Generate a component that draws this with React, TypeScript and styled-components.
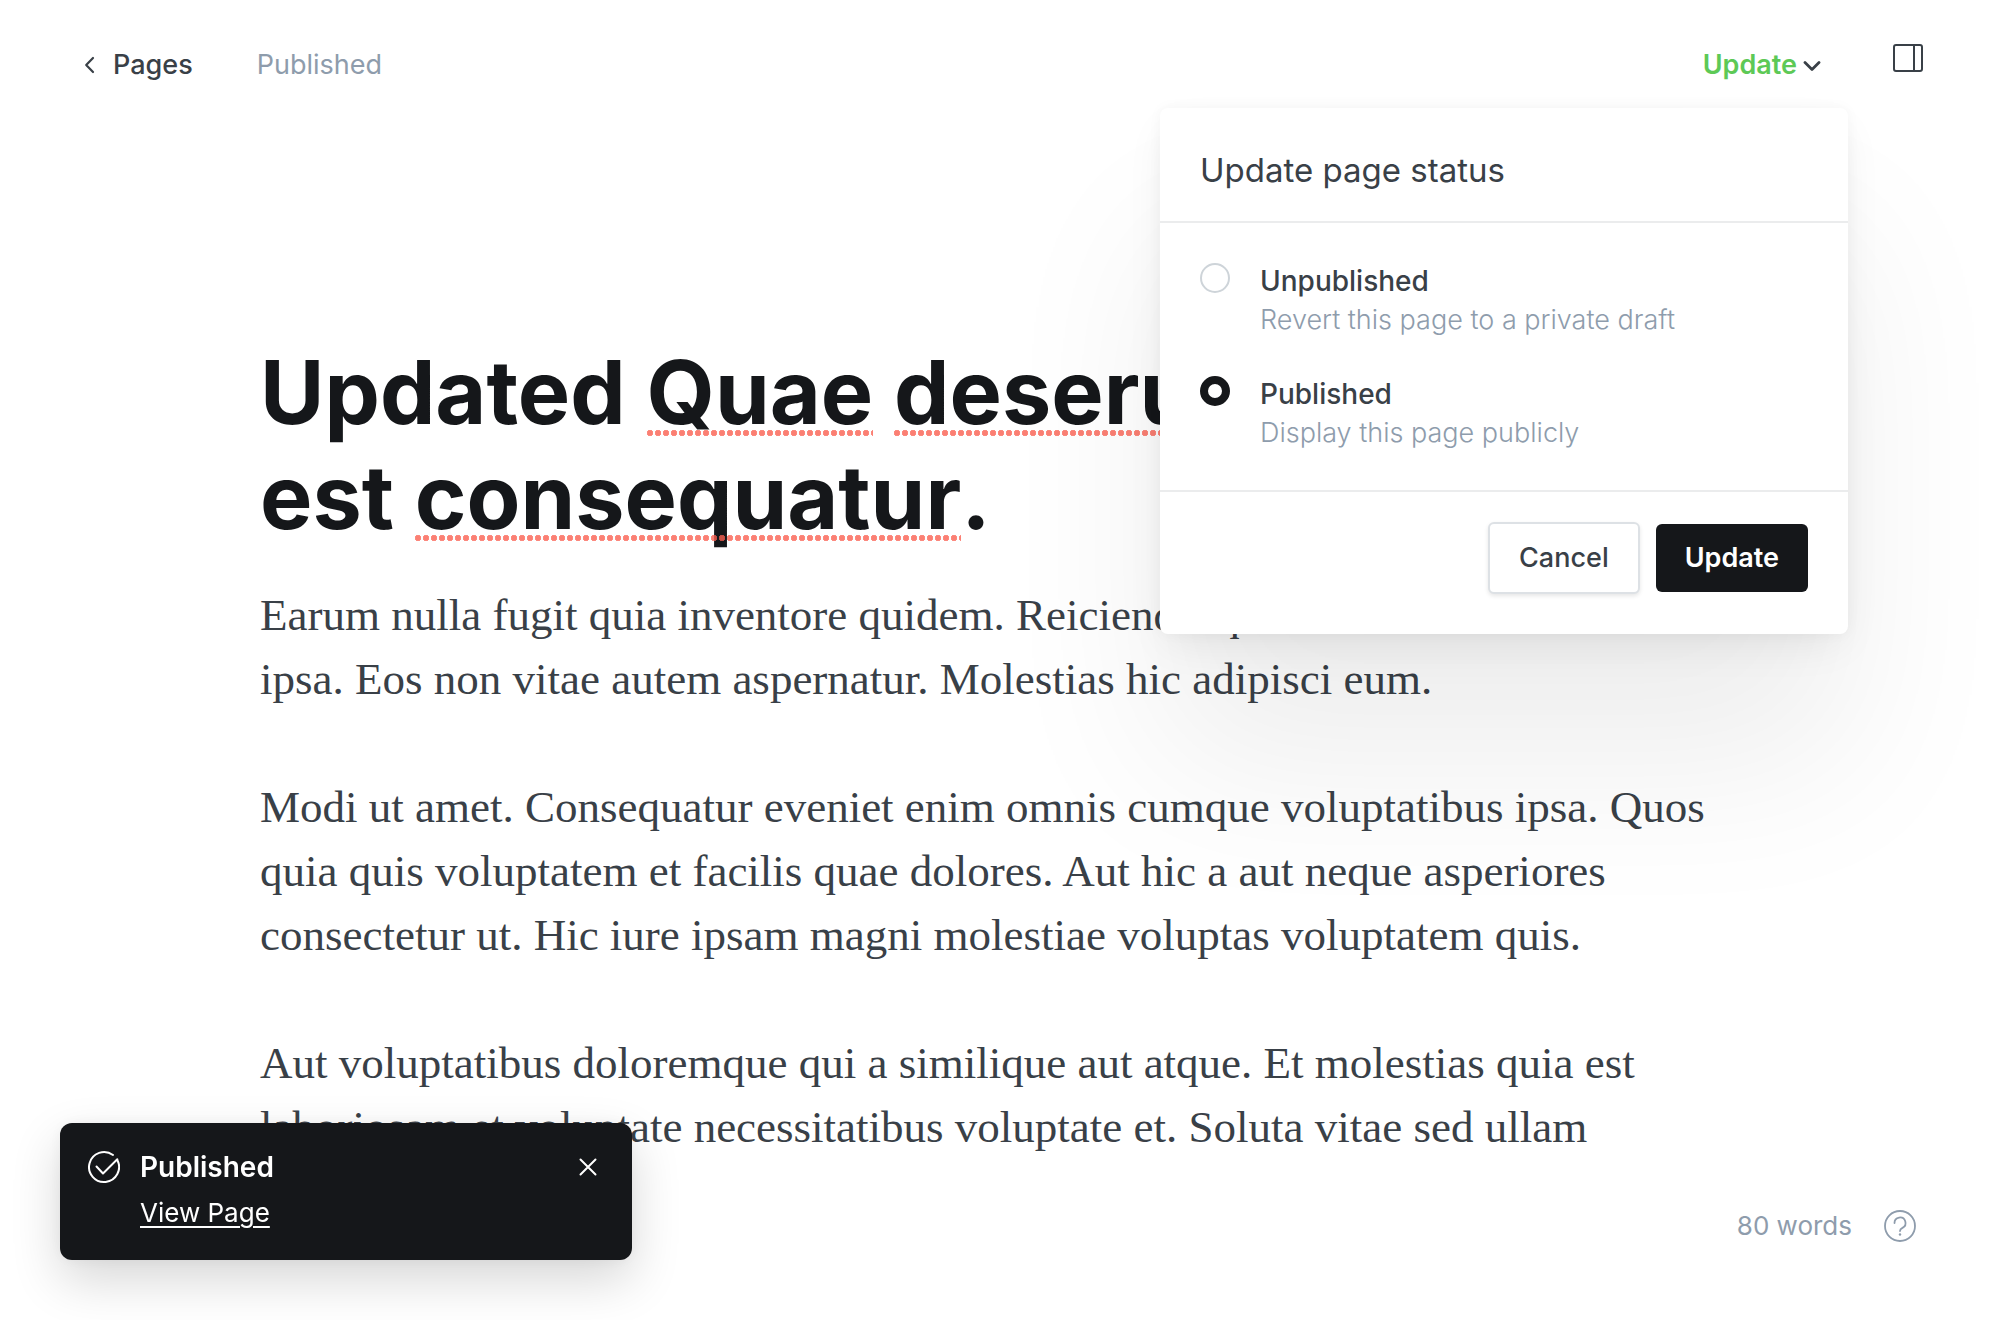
import React, { useState } from "react";
import styled, { createGlobalStyle, css } from "styled-components";

const ink = "#15171a";
const text = "#394047";
const muted = "#8e9cac";
const line = "#ebeced";

const GlobalStyle = createGlobalStyle`
  *, *::before, *::after { box-sizing: border-box; }
  body {
    margin: 0;
    background: #fff;
    color: ${text};
    font-family: Inter, "Liberation Sans", sans-serif;
    font-size: 27px;
    line-height: 32px;
    -webkit-font-smoothing: antialiased;
  }
  h1, h2, p { margin: 0; }
  button { font: inherit; color: inherit; border: 0; background: none; padding: 0; cursor: pointer; }
  svg { display: block; }
`;

const Page = styled.div`
  display: flex;
  flex-direction: column;
  min-height: 100vh;
  overflow: hidden;
`;

const Header = styled.header`
  display: flex;
  align-items: center;
  justify-content: space-between;
  height: 128px;
  padding: 2px 76px 0 84px;
`;

const HeaderGroup = styled.div<{ $gap: number }>`
  display: flex;
  align-items: center;
  gap: ${(p) => p.$gap}px;
`;

const BackLink = styled.a`
  display: flex;
  align-items: center;
  gap: 17px;
  color: ${text};
  font-weight: 500;
  text-decoration: none;
`;

const Status = styled.span`
  color: ${muted};
`;

const MenuAnchor = styled.div`
  position: relative;
`;

const MenuTrigger = styled.button`
  display: flex;
  align-items: center;
  gap: 6px;
  color: #5dc956;
  font-weight: 600;
`;

const IconButton = styled.button<{ $raised?: boolean }>`
  display: block;
  ${(p) => p.$raised && css`padding-bottom: 14px;`}
`;

const Menu = styled.form`
  position: absolute;
  z-index: 2;
  top: 59px;
  right: -27px;
  width: 688px;
  border-radius: 8px;
  background: #fff;
  box-shadow:
    0 0 14px rgba(0, 0, 0, 0.04),
    0 16px 40px -8px rgba(0, 0, 0, 0.08),
    0 130px 170px rgba(0, 0, 0, 0.07);
`;

const MenuTitle = styled.h2`
  padding: 42px 40px 31px;
  border-bottom: 2px solid ${line};
  font-size: 33px;
  line-height: 40px;
  font-weight: 400;
`;

const Options = styled.div`
  display: flex;
  flex-direction: column;
  gap: 35px;
  padding: 38px 40px;
  border-bottom: 2px solid ${line};
`;

const Option = styled.label`
  display: grid;
  grid-template-columns: 30px 1fr;
  column-gap: 30px;
  align-items: start;
  cursor: pointer;
`;

const Radio = styled.input`
  appearance: none;
  width: 30px;
  height: 30px;
  margin: 2px 0 0;
  border: 2px solid #ced4d9;
  border-radius: 50%;
  background: #fff;
  &:checked { border: 8px solid ${ink}; }
`;

const OptionText = styled.span`
  display: flex;
  flex-direction: column;
`;

const OptionName = styled.span`
  font-size: 28px;
  line-height: 40px;
  font-weight: 500;
`;

const OptionHint = styled.span`
  line-height: 38px;
  font-weight: 300;
  color: ${muted};
`;

const Actions = styled.div`
  display: flex;
  align-items: center;
  justify-content: flex-end;
  gap: 16px;
  padding: 30px 40px 40px;
`;

const Button = styled.button<{ $primary?: boolean }>`
  height: 72px;
  padding: 0 29px;
  border: 2px solid #dde1e5;
  border-radius: 6px;
  background: #fff;
  font-weight: 500;
  box-shadow: 0 2px 4px rgba(0, 0, 0, 0.1);
  ${(p) =>
    p.$primary &&
    css`
      height: 68px;
      border: 0;
      background: ${ink};
      color: #fff;
      font-weight: 600;
      box-shadow: none;
    `}
`;

const Article = styled.main`
  width: 100%;
  max-width: 1480px;
  margin: 0 auto;
  padding-top: 212px;
`;

const Title = styled.h1`
  color: ${ink};
  font-size: 88px;
  line-height: 105px;
  font-weight: 700;
`;

const Misspelled = styled.span`
  position: relative;
  &::after {
    content: "";
    position: absolute;
    left: 0;
    right: 0;
    bottom: 9px;
    height: 6px;
    background: radial-gradient(circle at 3px 3px, rgba(250, 95, 80, 0.8) 2px, rgba(250, 95, 80, 0.7) 3px, transparent 3px) 0 0 / 8px 6px;
  }
`;

const Body = styled.div`
  display: flex;
  flex-direction: column;
  gap: 64px;
  margin-top: 33px;
  font-family: "Liberation Serif", serif;
  font-size: 45px;
  line-height: 64px;
`;

const Toast = styled.aside`
  position: fixed;
  z-index: 3;
  left: 60px;
  bottom: 60px;
  display: grid;
  grid-template-columns: 32px 1fr 18px;
  column-gap: 20px;
  align-items: center;
  width: 572px;
  padding: 24px 35px 28px 28px;
  border-radius: 12px;
  background: ${ink};
  color: #fff;
  box-shadow:
    0 0 16px rgba(0, 0, 0, 0.05),
    0 20px 50px rgba(0, 0, 0, 0.16);
`;

const ToastTitle = styled.p`
  font-size: 28px;
  line-height: 40px;
  font-weight: 600;
`;

const ToastLink = styled.a`
  grid-column: 2;
  justify-self: start;
  margin-top: 7px;
  font-size: 26px;
  line-height: 38px;
  color: #fff;
  text-decoration: underline;
  text-underline-offset: 4px;
  text-decoration-thickness: 2px;
`;

const Footer = styled.footer`
  display: flex;
  align-items: center;
  justify-content: flex-end;
  gap: 32px;
  margin-top: auto;
  padding: 0 84px 78px;
  font-size: 26px;
  color: ${muted};
`;

const ChevronLeft = () => (
  <svg width="12" height="18" viewBox="0 0 12 18" fill="none" stroke={text} strokeWidth="2.2" strokeLinecap="round" strokeLinejoin="round">
    <path d="M9 2 2.2 9 9 16" />
  </svg>
);

const ChevronDown = () => (
  <svg width="18" height="12" viewBox="0 0 18 12" fill="none" stroke={text} strokeWidth="2.8" strokeLinecap="round" strokeLinejoin="round">
    <path d="M2 3.5 9 10.5 16 3.5" />
  </svg>
);

const SidebarIcon = () => (
  <svg width="32" height="30" viewBox="0 0 32 30" fill="none" stroke={text} strokeWidth="2">
    <rect x="2" y="2" width="28" height="26" rx="2" />
    <path d="M22 2v26" />
  </svg>
);

const CheckIcon = () => (
  <svg width="32" height="38" viewBox="0 0 32 38" fill="none" stroke="#fff" strokeWidth="2" strokeLinecap="round" strokeLinejoin="round">
    <path d="M25 7A15 15 0 1 0 29.3 12" />
    <path d="M8.5 18.5 15 25.5 29.3 11.2" />
  </svg>
);

const CloseIcon = () => (
  <svg width="18" height="18" viewBox="0 0 18 18" fill="none" stroke="#fff" strokeWidth="2" strokeLinecap="round">
    <path d="M1.5 1.5l15 15M16.5 1.5l-15 15" />
  </svg>
);

const HelpIcon = () => (
  <svg width="32" height="32" viewBox="0 0 32 32" fill="none" stroke={muted} strokeWidth="1.8" strokeLinecap="round">
    <circle cx="16" cy="16" r="15" />
    <path d="M10.5 13a5.5 5.5 0 1 1 8 4.9c-1.7.9-2.5 1.5-2.5 3.1" />
    <circle cx="16" cy="24.5" r="1.2" fill={muted} stroke="none" />
  </svg>
);

const statuses = [
  { id: "unpublished", name: "Unpublished", hint: "Revert this page to a private draft" },
  { id: "published", name: "Published", hint: "Display this page publicly" },
];

export default function App() {
  const [status, setStatus] = useState("published");

  return (
    <Page>
      <GlobalStyle />
      <Header>
        <HeaderGroup $gap={64}>
          <BackLink href="#pages">
            <ChevronLeft />
            Pages
          </BackLink>
          <Status>Published</Status>
        </HeaderGroup>
        <HeaderGroup $gap={71}>
          <MenuAnchor>
            <MenuTrigger type="button" aria-expanded="true">
              Update
              <ChevronDown />
            </MenuTrigger>
            <Menu onSubmit={(e) => e.preventDefault()}>
              <MenuTitle>Update page status</MenuTitle>
              <Options>
                {statuses.map((s) => (
                  <Option key={s.id} htmlFor={s.id}>
                    <Radio
                      type="radio"
                      id={s.id}
                      name="status"
                      checked={status === s.id}
                      onChange={() => setStatus(s.id)}
                    />
                    <OptionText>
                      <OptionName>{s.name}</OptionName>
                      <OptionHint>{s.hint}</OptionHint>
                    </OptionText>
                  </Option>
                ))}
              </Options>
              <Actions>
                <Button type="button">Cancel</Button>
                <Button type="submit" $primary>Update</Button>
              </Actions>
            </Menu>
          </MenuAnchor>
          <IconButton type="button" aria-label="Settings" $raised>
            <SidebarIcon />
          </IconButton>
        </HeaderGroup>
      </Header>

      <Article>
        <Title>
          Updated <Misspelled>Quae</Misspelled> <Misspelled>deserunt</Misspelled>
          <br />
          est <Misspelled>consequatur</Misspelled>.
        </Title>
        <Body>
          <p>
            Earum nulla fugit quia inventore quidem. Reiciendis quia
            <br />
            ipsa. Eos non vitae autem aspernatur. Molestias hic adipisci eum.
          </p>
          <p>
            Modi ut amet. Consequatur eveniet enim omnis cumque voluptatibus ipsa. Quos
            <br />
            quia quis voluptatem et facilis quae dolores. Aut hic a aut neque asperiores
            <br />
            consectetur ut. Hic iure ipsam magni molestiae voluptas voluptatem quis.
          </p>
          <p>
            Aut voluptatibus doloremque qui a similique aut atque. Et molestias quia est
            <br />
            laboriosam et voluptate necessitatibus voluptate et. Soluta vitae sed ullam
          </p>
        </Body>
      </Article>

      <Footer>
        <span>80 words</span>
        <IconButton type="button" aria-label="Help">
          <HelpIcon />
        </IconButton>
      </Footer>

      <Toast role="status">
        <CheckIcon />
        <ToastTitle>Published</ToastTitle>
        <IconButton type="button" aria-label="Close">
          <CloseIcon />
        </IconButton>
        <ToastLink href="#view">View Page</ToastLink>
      </Toast>
    </Page>
  );
}
